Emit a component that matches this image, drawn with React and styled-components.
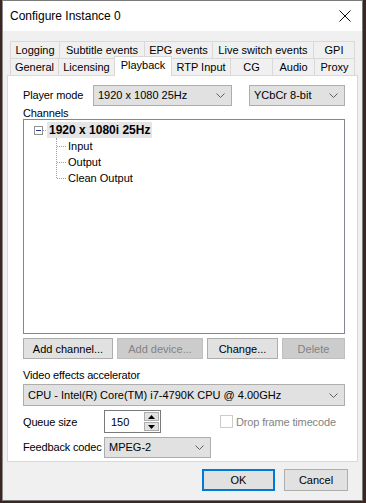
import React from "react";
import styled, { createGlobalStyle } from "styled-components";

const GlobalStyle = createGlobalStyle`
  html, body {
    margin: 0;
    padding: 0;
    background: #3b2622;
  }
  body {
    font-family: "Liberation Sans", Arial, sans-serif;
    font-size: 11px;
    color: #000;
  }
`;

const Page = styled.div`
  width: 366px;
  height: 503px;
  display: flex;
`;

const Window = styled.div`
  margin-left: 2px;
  width: 361px;
  height: 501px;
  background: #f0f0f0;
  border: 1px solid #7a7a7a;
  border-left-color: #8a8a8a;
  box-sizing: border-box;
  display: flex;
  flex-direction: column;
`;

const TitleBar = styled.div`
  height: 30px;
  background: #fff;
  display: flex;
  align-items: center;
  justify-content: space-between;
  padding: 0 7px 0 7px;
  font-size: 12px;
`;

const Close = styled.div`
  width: 16px;
  height: 16px;
  display: flex;
  align-items: center;
  justify-content: center;
  margin-right: 2px;
`;

const Body = styled.div`
  flex: 1;
  display: flex;
  flex-direction: column;
  padding: 10px 4px 0 4px;
`;

const TabRow = styled.div`
  display: flex;
  height: 17px;
  margin-left: 3px;
  align-items: flex-end;
  position: relative;
  z-index: ${(p) => p.$z || 1};
`;

const Tab = styled.div`
  width: ${(p) => p.$w}px;
  height: ${(p) => (p.$active ? 20 : 17)}px;
  box-sizing: border-box;
  border: 1px solid #d9d9d9;
  border-bottom: none;
  margin-right: -1px;
  background: ${(p) => (p.$active ? "#fff" : "#f0f0f0")};
  display: flex;
  align-items: ${(p) => (p.$active ? "flex-start" : "center")};
  padding-top: ${(p) => (p.$active ? "2px" : "0")};
  justify-content: center;
  font-size: 11px;
  white-space: nowrap;
  position: relative;
  margin-bottom: ${(p) => (p.$active ? "-1px" : "0")};
  z-index: ${(p) => (p.$active ? 3 : 1)};
`;

const Panel = styled.div`
  background: #fff;
  border: 1px solid #d9d9d9;
  height: 387px;
  box-sizing: border-box;
  padding: 8px 12px 0 15px;
  display: flex;
  flex-direction: column;
  position: relative;
  z-index: 2;
`;

const Row = styled.div`
  display: flex;
  align-items: center;
  height: ${(p) => p.$h || 22}px;
  margin-top: ${(p) => p.$mt || 0}px;
`;

const Label = styled.div`
  width: ${(p) => (p.$w ? `${p.$w}px` : "auto")};
  color: ${(p) => (p.$disabled ? "#838383" : "#000")};
  font-size: 11px;
  letter-spacing: -0.15px;
  white-space: nowrap;
  flex-shrink: 0;
`;

const Select = styled.div`
  width: ${(p) => p.$w}px;
  height: ${(p) => p.$h || 21}px;
  margin-left: ${(p) => p.$ml || 0}px;
  box-sizing: border-box;
  border: 1px solid #adadad;
  background: #e1e1e1;
  display: flex;
  align-items: center;
  justify-content: space-between;
  padding: 0 6px 0 4px;
  font-size: 11px;
  white-space: nowrap;
`;

const Chevron = () => (
  <svg width="9" height="5" viewBox="0 0 9 5">
    <path d="M0.5 0.5 L4.5 4.5 L8.5 0.5" fill="none" stroke="#606060" strokeWidth="1" />
  </svg>
);

const Tree = styled.div`
  height: 215px;
  border: 1px solid #828790;
  background: #fff;
  box-sizing: border-box;
  padding: 2px 0 0 10px;
`;

const TreeRoot = styled.div`
  display: flex;
  align-items: center;
  height: 16px;
`;

const Expander = styled.div`
  width: 9px;
  height: 9px;
  box-sizing: border-box;
  border: 1px solid #919191;
  display: flex;
  align-items: center;
  justify-content: center;
  background: #fff;
  &::after {
    content: "";
    width: 5px;
    height: 1px;
    background: #1e3a8a;
  }
`;

const Dots = styled.div`
  width: ${(p) => p.$w}px;
  border-top: 1px dotted #a0a0a0;
`;

const RootText = styled.div`
  font-weight: bold;
  font-size: 12px;
  background: #e5e5e5;
  padding: 0 2px;
  height: 16px;
  line-height: 16px;
  margin-left: 1px;
`;

const Children = styled.div`
  margin-left: 22px;
  border-left: 1px dotted #a0a0a0;
  height: 40px;
`;

const Child = styled.div`
  display: flex;
  align-items: center;
  height: 16px;
  font-size: 11px;
  span {
    margin-left: 2px;
  }
`;

const Buttons = styled.div`
  display: flex;
  gap: 4px;
  margin-top: 4px;
`;

const Button = styled.div`
  width: ${(p) => p.$w}px;
  height: ${(p) => p.$h || 21}px;
  box-sizing: border-box;
  border: ${(p) =>
    p.$primary ? "2px solid #0078d7" : p.$disabled ? "1px solid #bfbfbf" : "1px solid #adadad"};
  background: ${(p) => (p.$disabled ? "#cccccc" : "#e1e1e1")};
  color: ${(p) => (p.$disabled ? "#838383" : "#000")};
  display: flex;
  align-items: center;
  justify-content: center;
  font-size: 11px;
  white-space: nowrap;
`;

const Spin = styled.div`
  width: 57px;
  height: 23px;
  box-sizing: border-box;
  border: 1px solid #7a7a7a;
  display: flex;
  align-items: center;
  justify-content: space-between;
  padding-left: 6px;
  font-size: 11px;
`;

const SpinButtons = styled.div`
  display: flex;
  flex-direction: column;
  gap: 1px;
  padding: 1px;
  height: 100%;
  box-sizing: border-box;
`;

const SpinBtn = styled.div`
  width: 15px;
  flex: 1;
  background: #e1e1e1;
  border: 1px solid #adadad;
  box-sizing: border-box;
  display: flex;
  align-items: center;
  justify-content: center;
`;

const Check = styled.div`
  width: 13px;
  height: 13px;
  box-sizing: border-box;
  border: 1px solid #cccccc;
  background: #fff;
  margin-left: 59px;
  margin-right: 3px;
`;

const Footer = styled.div`
  display: flex;
  justify-content: flex-end;
  gap: 9px;
  padding: 7px 10px 0 0;
`;

const Arrow = ({ up }) => (
  <svg width="7" height="4" viewBox="0 0 7 4">
    <path d={up ? "M0 4 L3.5 0 L7 4 Z" : "M0 0 L3.5 4 L7 0 Z"} fill="#000" />
  </svg>
);

const row1 = [
  ["Logging", 50],
  ["Subtitle events", 86],
  ["EPG events", 69],
  ["Live switch events", 102],
  ["GPI", 42],
];
const row2 = [
  ["General", 49],
  ["Licensing", 57],
  ["Playback", 58, true],
  ["RTP Input", 60],
  ["CG", 43],
  ["Audio", 43],
  ["Proxy", 41],
];

const App = () => {
  return (
    <Page>
      <GlobalStyle />
      <Window>
        <TitleBar>
          <span>Configure Instance 0</span>
          <Close>
            <svg width="12" height="12" viewBox="0 0 12 12">
              <path d="M0.5 0.5 L11.5 11.5 M11.5 0.5 L0.5 11.5" stroke="#111" strokeWidth="1" />
            </svg>
          </Close>
        </TitleBar>
        <Body>
          <TabRow>
            {row1.map(([name, w]) => (
              <Tab key={name} $w={w}>
                {name}
              </Tab>
            ))}
          </TabRow>
          <TabRow $z={3}>
            {row2.map(([name, w, active]) => (
              <Tab key={name} $w={w} $active={active}>
                {name}
              </Tab>
            ))}
          </TabRow>
          <Panel>
            <Row>
              <Label $w={70}>Player mode</Label>
              <Select $w={139}>
                1920 x 1080 25Hz <Chevron />
              </Select>
              <Select $w={96} $ml={17}>
                YCbCr 8-bit <Chevron />
              </Select>
            </Row>
            <Row $h={13}>
              <Label>Channels</Label>
            </Row>
            <Tree>
              <TreeRoot>
                <Expander />
                <Dots $w={3} />
                <RootText>1920 x 1080i 25Hz</RootText>
              </TreeRoot>
              <Children>
                <Child>
                  <Dots $w={9} />
                  <span>Input</span>
                </Child>
                <Child>
                  <Dots $w={9} />
                  <span>Output</span>
                </Child>
                <Child>
                  <Dots $w={9} />
                  <span>Clean Output</span>
                </Child>
              </Children>
            </Tree>
            <Buttons>
              <Button $w={90}>Add channel...</Button>
              <Button $w={86} $disabled>
                Add device...
              </Button>
              <Button $w={71}>Change...</Button>
              <Button $w={63} $disabled>
                Delete
              </Button>
            </Buttons>
            <Row $h={14} $mt={9}>
              <Label>Video effects accelerator</Label>
            </Row>
            <Row $mt={2}>
              <Select $w={322} $h={22}>
                CPU - Intel(R) Core(TM) i7-4790K CPU @ 4.00GHz <Chevron />
              </Select>
            </Row>
            <Row $h={23} $mt={4}>
              <Label $w={81}>Queue size</Label>
              <Spin>
                150
                <SpinButtons>
                  <SpinBtn>
                    <Arrow up />
                  </SpinBtn>
                  <SpinBtn>
                    <Arrow />
                  </SpinBtn>
                </SpinButtons>
              </Spin>
              <Check />
              <Label $disabled>Drop frame timecode</Label>
            </Row>
            <Row $mt={3}>
              <Label $w={81}>Feedback codec</Label>
              <Select $w={107}>
                MPEG-2 <Chevron />
              </Select>
            </Row>
          </Panel>
          <Footer>
            <Button $w={73} $h={22} $primary>
              OK
            </Button>
            <Button $w={64} $h={22}>
              Cancel
            </Button>
          </Footer>
        </Body>
      </Window>
    </Page>
  );
};

export default App;
